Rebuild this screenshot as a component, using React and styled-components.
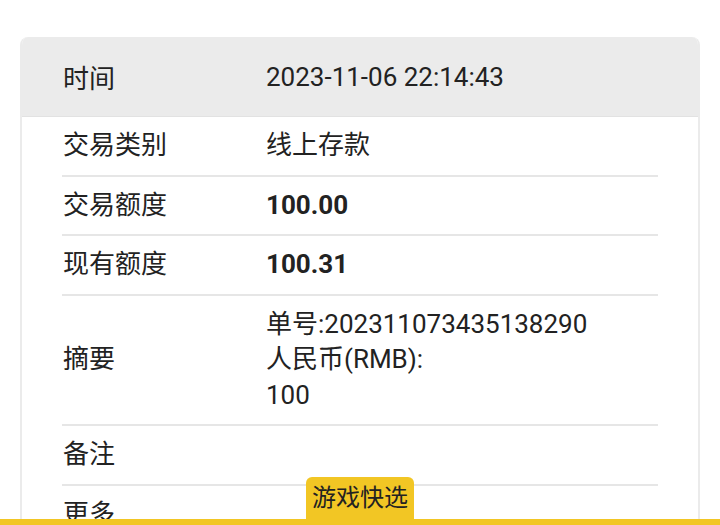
import React from "react";
import styled, { createGlobalStyle } from "styled-components";

const GlobalStyle = createGlobalStyle`
  html, body {
    margin: 0;
    padding: 0;
    background: #ffffff;
  }
  body {
    font-family: Roboto, "Noto Sans CJK SC", sans-serif;
    color: #222222;
  }
`;

const rows = [
  { label: "交易类别", value: ["线上存款"] },
  { label: "交易额度", value: ["100.00"], bold: true },
  { label: "现有额度", value: ["100.31"], bold: true },
  {
    label: "摘要",
    value: ["单号:202311073435138290", "人民币(RMB):", "100"],
  },
  { label: "备注", value: [] },
  { label: "更多", value: [] },
];

function App() {
  return (
    <>
      <GlobalStyle />
      <Page>
        <Card>
          <Header>
            <Label>时间</Label>
            <Value>2023-11-06 22:14:43</Value>
          </Header>
          <Body>
            {rows.map((row) => (
              <Row key={row.label}>
                <Label>{row.label}</Label>
                <Value bold={row.bold}>
                  {row.value.map((line) => (
                    <div key={line}>{line}</div>
                  ))}
                </Value>
              </Row>
            ))}
          </Body>
        </Card>
      </Page>
      <QuickTab>游戏快选</QuickTab>
      <BottomBar />
    </>
  );
}

export default App;

const Page = styled.div`
  padding: 37px 20px 40px;
`;

const Card = styled.div`
  width: 680px;
  box-sizing: border-box;
  border: 2px solid #ebebeb;
  border-top: none;
  border-radius: 8px 8px 0 0;
  overflow: hidden;
`;

const Header = styled.div`
  display: flex;
  align-items: center;
  height: 79px;
  padding: 0 40px;
  background: #ebebeb;
  border-bottom: 1px solid #e2e2e2;
  font-size: 26px;
`;

const Body = styled.div`
  padding: 0 40px;
`;

const Row = styled.div`
  display: flex;
  align-items: center;
  padding: 11px 0;
  min-height: 35.5px;
  border-bottom: 2px solid #e6e6e6;
  font-size: 26px;
  line-height: 35.5px;
`;

const Label = styled.div`
  flex: 0 0 203px;
  padding-left: 1px;
`;

const Value = styled.div`
  display: flex;
  flex-direction: column;
  font-weight: ${({ bold }) => (bold ? 700 : 400)};
`;

const QuickTab = styled.div`
  position: fixed;
  left: 306px;
  bottom: 0;
  width: 108px;
  height: 48px;
  box-sizing: border-box;
  padding-top: 4px;
  background: #f2c624;
  border-radius: 6px 6px 0 0;
  font-size: 24px;
  line-height: 34px;
  text-align: center;
  color: #222222;
`;

const BottomBar = styled.div`
  position: fixed;
  left: 0;
  right: 0;
  bottom: 0;
  height: 6px;
  background: #f2c624;
`;
